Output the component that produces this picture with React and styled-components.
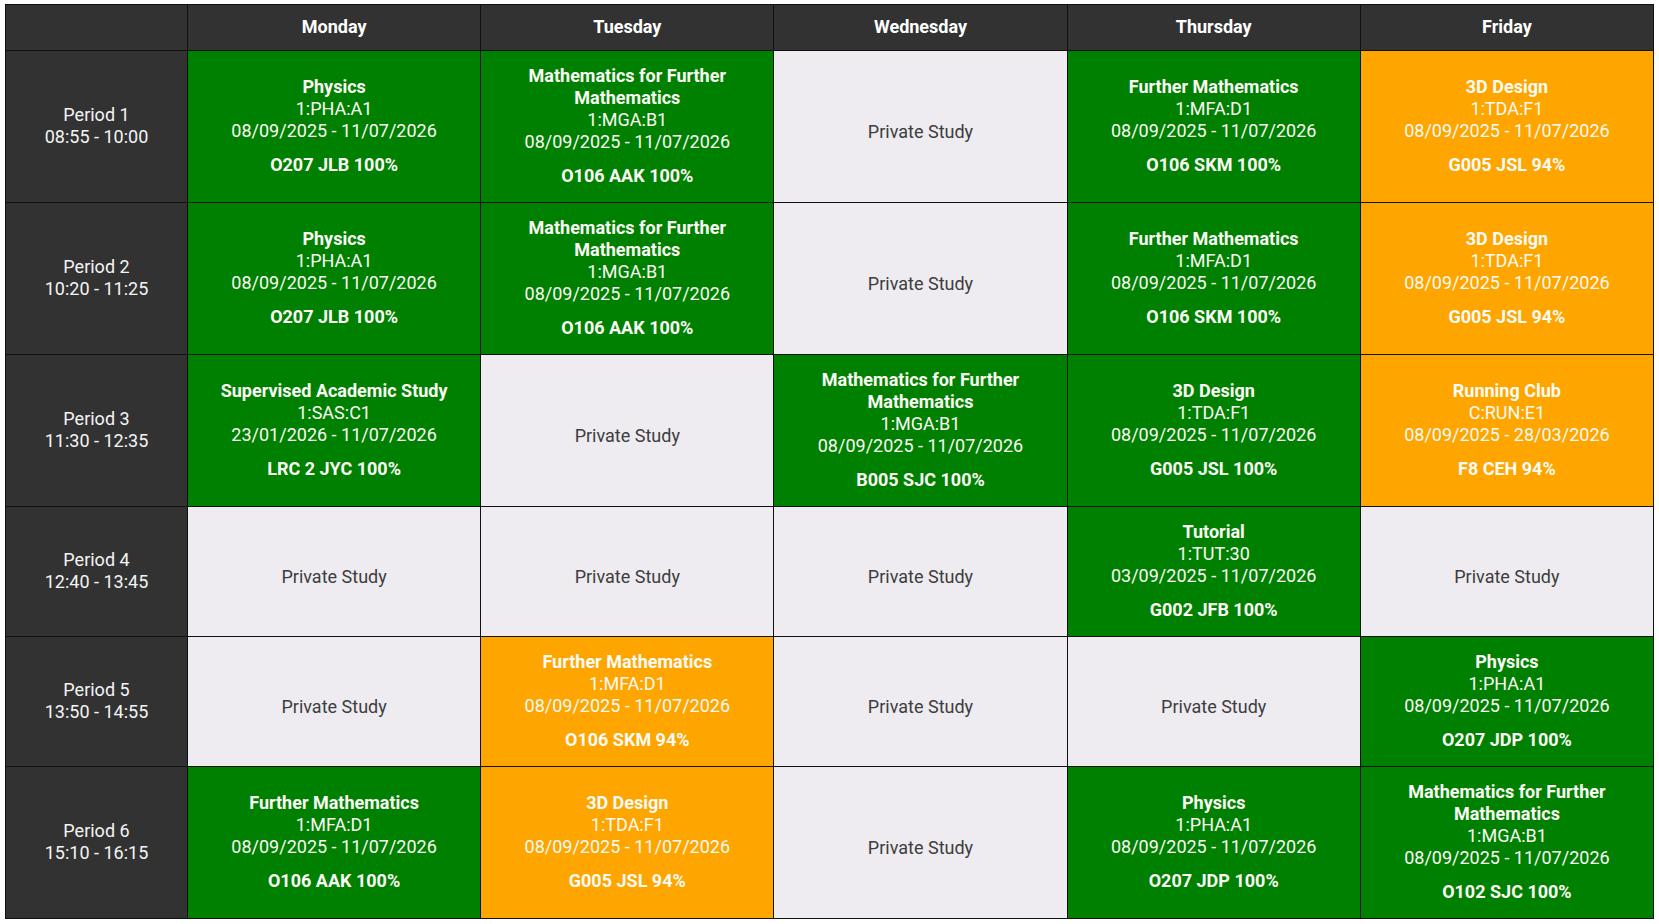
import React from "react";
import styled, { createGlobalStyle } from "styled-components";

const GlobalStyle = createGlobalStyle`
  body {
    margin: 0;
    background: #fff;
    font-family: Roboto, "Liberation Sans", Arial, sans-serif;
  }
`;

const days = ["Monday", "Tuesday", "Wednesday", "Thursday", "Friday"];

const periods = [
  { name: "Period 1", time: "08:55 - 10:00" },
  { name: "Period 2", time: "10:20 - 11:25" },
  { name: "Period 3", time: "11:30 - 12:35" },
  { name: "Period 4", time: "12:40 - 13:45" },
  { name: "Period 5", time: "13:50 - 14:55" },
  { name: "Period 6", time: "15:10 - 16:15" },
];

const STD = "08/09/2025 - 11/07/2026";

const lesson = (title, code, room, tone = "green", dates = STD) => ({
  title,
  code,
  room,
  tone,
  dates,
});

const physics = (room, tone) => lesson("Physics", "1:PHA:A1", room, tone);
const mfm = (room, tone) =>
  lesson("Mathematics for Further Mathematics", "1:MGA:B1", room, tone);
const further = (room, tone) =>
  lesson("Further Mathematics", "1:MFA:D1", room, tone);
const design = (room, tone) => lesson("3D Design", "1:TDA:F1", room, tone);

// one row per period, monday..friday, null = private study
const timetable = [
  [
    physics("O207 JLB 100%"),
    mfm("O106 AAK 100%"),
    null,
    further("O106 SKM 100%"),
    design("G005 JSL 94%", "orange"),
  ],
  [
    physics("O207 JLB 100%"),
    mfm("O106 AAK 100%"),
    null,
    further("O106 SKM 100%"),
    design("G005 JSL 94%", "orange"),
  ],
  [
    lesson(
      "Supervised Academic Study",
      "1:SAS:C1",
      "LRC 2 JYC 100%",
      "green",
      "23/01/2026 - 11/07/2026"
    ),
    null,
    mfm("B005 SJC 100%"),
    design("G005 JSL 100%"),
    lesson(
      "Running Club",
      "C:RUN:E1",
      "F8 CEH 94%",
      "orange",
      "08/09/2025 - 28/03/2026"
    ),
  ],
  [
    null,
    null,
    null,
    lesson(
      "Tutorial",
      "1:TUT:30",
      "G002 JFB 100%",
      "green",
      "03/09/2025 - 11/07/2026"
    ),
    null,
  ],
  [
    null,
    further("O106 SKM 94%", "orange"),
    null,
    null,
    physics("O207 JDP 100%"),
  ],
  [
    further("O106 AAK 100%"),
    design("G005 JSL 94%", "orange"),
    null,
    physics("O207 JDP 100%"),
    mfm("O102 SJC 100%"),
  ],
];

const tones = {
  green: "#008000",
  orange: "#ffa500",
  free: "#eeecf0",
};

const Page = styled.div`
  padding: 4px 5px;
`;

const Grid = styled.div`
  display: grid;
  grid-template-columns: 181px repeat(5, 1fr);
  gap: 1px;
  background: #111;
  border: 1px solid #111;
  font-size: 18px;
  line-height: 22px;
`;

const HeadCell = styled.div`
  background: #323232;
  color: #fff;
  font-weight: 700;
  text-align: center;
  padding: 11px 8px 12px;
`;

const PeriodCell = styled.div`
  background: #323232;
  color: #f4f4f4;
  display: flex;
  flex-direction: column;
  align-items: center;
  justify-content: center;
  text-align: center;
  padding: 14px 8px 15px;
`;

const Cell = styled.div`
  background: ${(p) => tones[p.$tone]};
  color: ${(p) => (p.$tone === "free" ? "#3d3d3d" : "#fbfbf6")};
  display: flex;
  flex-direction: column;
  align-items: center;
  justify-content: center;
  text-align: center;
  padding: ${(p) => (p.$tone === "free" ? "26px 10px 15px" : "14px 10px 15px")};
`;

const Title = styled.div`
  font-weight: 700;
`;

const Room = styled.div`
  font-weight: 700;
  margin-top: 12px;
`;

const LessonCell = ({ item }) => {
  if (!item) return <Cell $tone="free">Private Study</Cell>;
  return (
    <Cell $tone={item.tone}>
      <Title>{item.title}</Title>
      <div>{item.code}</div>
      <div>{item.dates}</div>
      <Room>{item.room}</Room>
    </Cell>
  );
};

export default function App() {
  return (
    <Page>
      <GlobalStyle />
      <Grid>
        <HeadCell />
        {days.map((d) => (
          <HeadCell key={d}>{d}</HeadCell>
        ))}
        {periods.map((p, i) => (
          <React.Fragment key={p.name}>
            <PeriodCell>
              <div>{p.name}</div>
              <div>{p.time}</div>
            </PeriodCell>
            {timetable[i].map((item, j) => (
              <LessonCell key={j} item={item} />
            ))}
          </React.Fragment>
        ))}
      </Grid>
    </Page>
  );
}
